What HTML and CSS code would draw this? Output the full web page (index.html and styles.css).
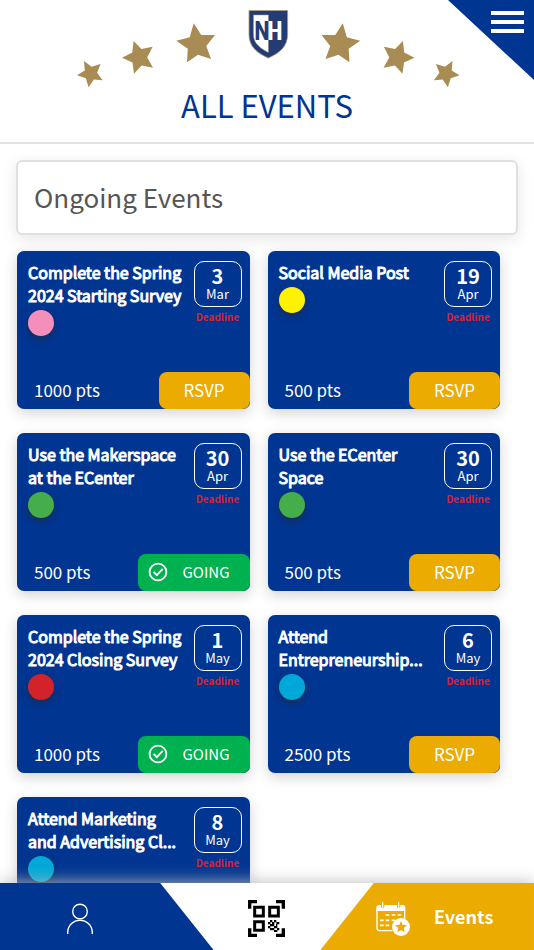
FILE: index.html
```html
<!DOCTYPE html>
<html lang="en">
<head>
    <meta charset="UTF-8">
    <meta name="viewport" content="width=device-width, initial-scale=1.0">
    <title>All Events</title>
    <link rel="stylesheet" href="styles.css">
</head>
<body>

    <!-- Check icon shared by the cards -->
    <svg class="sprite" aria-hidden="true">
        <symbol id="check" viewBox="0 0 20 20">
            <circle cx="10" cy="10" r="8.4" fill="none" stroke="#fff" stroke-width="1.8"/>
            <path d="M5.6 9.8l3.2 3.3 6-6.3" fill="none" stroke="#fff" stroke-width="1.9"/>
        </symbol>
    </svg>

    <header class="header">
        <svg class="emblem" viewBox="75 8 384 80" aria-hidden="true">
            <defs>
                <g id="stars" fill="#a98b54">
                    <path transform="translate(90.6 73.6)" d="M-6.6-12.6L1-6.8 10-9.6 6.5-.8 12 6.7 3.2 6-2 13.7-4.8 4.6-13.6 1.7-5.8-3.2z"/>
                    <path transform="translate(139 57.4)" d="M-5.4-16.4L2.4-8.4 13.6-10.7 8.2 0 14 10.3 2.6 8.2-5 16.3-6.5 5.1-17 .3-6.7-4.9z"/>
                    <path transform="translate(196.6 44.3)" d="M-2.9-21L4.6-9.4 18.4-9.3 9.7 1.7 14.4 14.7 1.4 10.4-9.6 18-8.8 4.5-20.3-3.6-6.9-7z"/>
                </g>
            </defs>
            <use href="#stars"/>
            <use href="#stars" transform="translate(536.5 0) scale(-1 1)"/>
            <path d="M249 10.5h38.6v24c0 12-8 18.500-19.300 23.500-11.300-5-19.300-11.500-19.300-23.500z" fill="#233c74" stroke="#a99a7c" stroke-width=".8"/>
            <path d="M253.500 15h14.900v37.500c-9-4.500-14.900-9.500-14.900-18z" fill="#fff" stroke="#a99a7c" stroke-width=".5"/>
            <text x="262" y="40" text-anchor="middle" class="emblem-letter" fill="#233c74">N</text>
            <text x="275" y="40" text-anchor="middle" class="emblem-letter" fill="#fff">H</text>
        </svg>
        <h1>ALL EVENTS</h1>
        <button class="menu-button" type="button" aria-label="Menu">
            <span class="menu-bar"></span>
            <span class="menu-bar"></span>
            <span class="menu-bar"></span>
        </button>
    </header>

    <main class="events">
        <h2 class="section-title">Ongoing Events</h2>

        <div class="event-grid">
            <article class="event-card">
                <div class="event-top">
                    <div class="event-info">
                        <h3>Complete the Spring 2024 Starting Survey</h3>
                        <span class="dot pink"></span>
                    </div>
                    <div class="event-date">
                        <div class="date-box"><strong>3</strong><span>Mar</span></div>
                        <span class="deadline">Deadline</span>
                    </div>
                </div>
                <div class="event-bottom">
                    <span class="points">1000 pts</span>
                    <button class="rsvp" type="button">RSVP</button>
                </div>
            </article>

            <article class="event-card">
                <div class="event-top">
                    <div class="event-info">
                        <h3>Social Media Post</h3>
                        <span class="dot yellow"></span>
                    </div>
                    <div class="event-date">
                        <div class="date-box"><strong>19</strong><span>Apr</span></div>
                        <span class="deadline">Deadline</span>
                    </div>
                </div>
                <div class="event-bottom">
                    <span class="points">500 pts</span>
                    <button class="rsvp" type="button">RSVP</button>
                </div>
            </article>

            <article class="event-card">
                <div class="event-top">
                    <div class="event-info">
                        <h3>Use the Makerspace at the ECenter</h3>
                        <span class="dot green"></span>
                    </div>
                    <div class="event-date">
                        <div class="date-box"><strong>30</strong><span>Apr</span></div>
                        <span class="deadline">Deadline</span>
                    </div>
                </div>
                <div class="event-bottom">
                    <span class="points">500 pts</span>
                    <button class="rsvp going" type="button"><svg class="check"><use href="#check"/></svg>GOING</button>
                </div>
            </article>

            <article class="event-card">
                <div class="event-top">
                    <div class="event-info">
                        <h3>Use the ECenter Space</h3>
                        <span class="dot green"></span>
                    </div>
                    <div class="event-date">
                        <div class="date-box"><strong>30</strong><span>Apr</span></div>
                        <span class="deadline">Deadline</span>
                    </div>
                </div>
                <div class="event-bottom">
                    <span class="points">500 pts</span>
                    <button class="rsvp" type="button">RSVP</button>
                </div>
            </article>

            <article class="event-card">
                <div class="event-top">
                    <div class="event-info">
                        <h3>Complete the Spring 2024 Closing Survey</h3>
                        <span class="dot red"></span>
                    </div>
                    <div class="event-date">
                        <div class="date-box"><strong>1</strong><span>May</span></div>
                        <span class="deadline">Deadline</span>
                    </div>
                </div>
                <div class="event-bottom">
                    <span class="points">1000 pts</span>
                    <button class="rsvp going" type="button"><svg class="check"><use href="#check"/></svg>GOING</button>
                </div>
            </article>

            <article class="event-card">
                <div class="event-top">
                    <div class="event-info">
                        <h3>Attend Entrepreneurship...</h3>
                        <span class="dot cyan"></span>
                    </div>
                    <div class="event-date">
                        <div class="date-box"><strong>6</strong><span>May</span></div>
                        <span class="deadline">Deadline</span>
                    </div>
                </div>
                <div class="event-bottom">
                    <span class="points">2500 pts</span>
                    <button class="rsvp" type="button">RSVP</button>
                </div>
            </article>

            <article class="event-card">
                <div class="event-top">
                    <div class="event-info">
                        <h3>Attend Marketing and Advertising Cl...</h3>
                        <span class="dot cyan"></span>
                    </div>
                    <div class="event-date">
                        <div class="date-box"><strong>8</strong><span>May</span></div>
                        <span class="deadline">Deadline</span>
                    </div>
                </div>
            </article>
        </div>
    </main>

    <nav class="bottom-nav">
        <a class="nav-profile" href="#profile" aria-label="Profile">
            <svg width="28" height="32" viewBox="0 0 28 32" fill="none" stroke="#fff" stroke-width="1.4">
                <circle cx="14" cy="8.500" r="7.300"/>
                <path d="M1.700 31v-1.500a12.300 12.300 0 0 1 24.600 0V31"/>
            </svg>
        </a>
        <a class="nav-scan" href="#scan" aria-label="Scan code">
            <svg width="37" height="37" viewBox="0 0 111 111">
                <path d="M0 0h27v10H10v16H0zM84 0h27v26h-10V10H84zM0 85h10v16h17v10H0zM101 85h10v26H84v-10h17z"/>
                <path d="M20 22h26v26H20zM65 22h26v26H65zM20 65h26v26H20z" fill="none" stroke="#000" stroke-width="9"/>
                <path d="M66 60h7v7h-7zM78 60h7v7h-7zM60 66h7v7h-7zM72 66h7v7h-7zM85 66h9v7h-9zM66 72h13v7H66zM78 78h10v7h-10zM60 78h7v7h-7zM66 84h13v7H66zM87 84h7v7h-7zM78 90h10v6h-10zM84 72h4v7h-4z"/>
            </svg>
        </a>
        <a class="nav-events" href="#events">
            <svg width="34" height="34" viewBox="0 0 102 102">
                <path d="M3 22v56q0 8 8 8h38M86 22v28" fill="none" stroke="#fff" stroke-width="4"/>
                <path d="M1 27V17q0-8 8-8h6v6q5 8 10 0V9h38v6q5 8 10 0V9h7q8 0 8 8v10z" fill="#fff"/>
                <path d="M20 2v14M68 2v14" stroke="#fff" stroke-width="4" stroke-linecap="round"/>
                <path d="M29 39h11M47 39h11M65 39h11M12 55h11M29 55h11M47 55h9M12 70h11M29 70h11" stroke="#fff" stroke-width="5"/>
                <circle cx="75" cy="75" r="27" fill="#fff"/>
                <path d="M75 57l5 12 13 1-10 8 3 13-11-7-11 7 3-13-10-8 13-1z" fill="#ebab00"/>
            </svg>
            <span class="nav-label">Events</span>
        </a>
    </nav>

</body>
</html>
```

FILE: styles.css
```css
* {
    box-sizing: border-box;
}
body {
    margin: 0;
    height: 100vh;
    display: flex;
    flex-direction: column;
    background-color: white;
    font-family: "Noto Sans CJK SC", sans-serif;
}
button {
    border: none;
    font-family: inherit;
    cursor: pointer;
}
.sprite {
    display: none;
}

/* Header */
.header {
    position: relative;
    padding: 8px 0 20px;
    text-align: center;
    border-bottom: 2px solid #e2e2e2;
}
.emblem {
    display: block;
    width: 384px;
    height: 80px;
    margin: 0 auto;
}
.emblem-letter {
    font-family: "Liberation Sans Narrow", "Roboto Condensed", "DejaVu Sans Condensed", sans-serif;
    font-size: 25px;
    font-weight: 700;
}
h1 {
    margin: 0;
    font-size: 31px;
    line-height: 34px;
    font-weight: 400;
    color: #003591;
}
.menu-button {
    position: absolute;
    top: 0;
    right: 0;
    width: 86px;
    height: 80px;
    padding: 11px 10px 0 0;
    display: flex;
    flex-direction: column;
    align-items: flex-end;
    gap: 5px;
    background-color: #003591;
    clip-path: polygon(0 0, 100% 0, 100% 100%);
}
.menu-bar {
    width: 33px;
    height: 4px;
    background-color: white;
}

/* Event list */
.events {
    flex: 1;
    min-height: 0;
    padding: 16px 16px 0;
    overflow-y: auto;
    scrollbar-width: none;
}
.section-title {
    margin: 0 0 16px;
    padding: 0 16px 2px;
    border: 2px solid #e0e0e0;
    border-radius: 6px;
    box-shadow: 0 4px 16px rgba(0, 0, 0, 0.1);
    font-size: 26px;
    line-height: 69px;
    font-weight: 400;
    color: #555;
}
.event-grid {
    display: grid;
    grid-template-columns: 1fr 1fr;
    gap: 24px 18px;
    padding: 0 18px 24px 1px;
}
.event-card {
    height: 158px;
    display: flex;
    flex-direction: column;
    justify-content: space-between;
    border-radius: 7px;
    background-color: #003591;
    box-shadow: 0 4px 14px rgba(0, 0, 0, 0.18);
    color: white;
}
.event-top {
    display: flex;
    justify-content: space-between;
    padding: 10px 8px 0 11px;
}
.event-info {
    flex: 1;
    margin-right: 8px;
}
h3 {
    margin: 0;
    font-size: 16px;
    line-height: 23px;
    font-weight: 400;
    -webkit-text-stroke: 1px white;
}
.dot {
    display: block;
    width: 26px;
    height: 26px;
    margin-top: 3px;
    border-radius: 50%;
    box-shadow: 0 3px 6px rgba(40, 40, 40, 0.6);
}
.pink {
    background-color: #f48ebb;
}
.yellow {
    background-color: #fff200;
}
.green {
    background-color: #45ae4a;
}
.red {
    background-color: #d2232a;
}
.cyan {
    background-color: #00a8d8;
}
.event-date {
    text-align: center;
}
.date-box {
    width: 48px;
    height: 46px;
    padding-top: 4px;
    border: 1px solid white;
    border-radius: 10px;
}
.date-box strong {
    display: block;
    font-size: 20px;
    line-height: 20px;
}
.date-box span {
    display: block;
    font-size: 13px;
    line-height: 16px;
}
.deadline {
    display: block;
    font-size: 10px;
    line-height: 20px;
    font-weight: 700;
    color: #d92231;
}
.event-bottom {
    display: flex;
    justify-content: space-between;
}
.points {
    padding-left: 17px;
    font-size: 17px;
    line-height: 35px;
}
.rsvp {
    width: 91px;
    height: 37px;
    padding: 0 0 2px;
    border-radius: 8px;
    background-color: #ebab00;
    font-size: 17px;
    color: white;
}
.going {
    width: 112px;
    display: flex;
    align-items: center;
    gap: 15px;
    padding-left: 10px;
    background-color: #00b14f;
    font-size: 15px;
}
.check {
    width: 20px;
    height: 20px;
}

/* Bottom navigation */
.bottom-nav {
    position: relative;
    display: flex;
    height: 67px;
    background-color: white;
    box-shadow: 0 0 16px #bbb;
}
.bottom-nav a {
    display: flex;
    align-items: center;
    justify-content: center;
    padding-top: 4px;
    color: white;
    text-decoration: none;
}
.nav-profile {
    width: 40%;
    padding-right: 53px;
    background-color: #003591;
    clip-path: polygon(0 0, 75% 0, 100% 100%, 0 100%);
}
.nav-scan {
    width: 20%;
}
.nav-events {
    width: 40%;
    gap: 24px;
    padding-left: 15px;
    background-color: #ebab00;
    clip-path: polygon(25% 0, 100% 0, 100% 100%, 0 100%);
}
.nav-label {
    padding-bottom: 6px;
    font-size: 18px;
    font-weight: 700;
}
```
